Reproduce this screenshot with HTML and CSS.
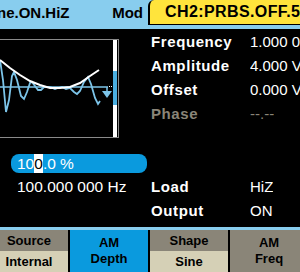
FILE: index.html
```html
<!DOCTYPE html>
<html>
  <head>
    <meta charset="utf-8" />
    <title>AM Depth</title>
    <meta name="viewport" content="width=device-width, initial-scale=1" />
    <link rel="stylesheet" href="styles.css">
  </head>
  <body>
    <div class="screen">
      <div class="topbar">
        <div class="ch1">
          <span class="ch1-name">ne.ON.HiZ</span>
          <span class="ch1-mode">Mod</span>
        </div>
        <div class="ch2">CH2:PRBS.OFF.500</div>
      </div>

      <div class="main">
        <div class="left">
          <div class="chart">
            <svg width="118" height="97" viewBox="0 0 118 97">
              <line x1="0" y1="47" x2="108" y2="47" stroke="#7cc4e8" stroke-width="1.5" />
              <path d="M0 20 L3 40 L6 72 L9 60 L12 36 L14 32 L17 40 L21 56 L24 59 L27 52 L30 43 L32 42 L35 46 L38 50 L41 50 L44 47 L50 47 L55 49 L58 48 L62 47 L66 49 L70 48 L74 52 L77 54 L80 51 L84 42 L88 37 L91 44 L95 58 L98 64 L100 61"
                fill="none" stroke="#7cc4e8" stroke-width="1.8" />
              <path d="M0 20 L10 28 L20 35 L30 41 L40 45 L50 48 L60 48 L70 47 L80 43 L90 36 L99 30"
                fill="none" stroke="#fff" stroke-width="2" />
              <line x1="107" y1="47" x2="107" y2="52" stroke="#7cc4e8" stroke-width="1.5" />
              <polygon points="102,51 112,51 107,58" fill="#7cc4e8" />
              <rect x="109" y="46" width="1" height="1" fill="#fff" />
              <rect x="111" y="46" width="1" height="1" fill="#fff" />
              <rect x="113" y="0" width="4" height="97" fill="#fff" />
              <rect x="113" y="31" width="4" height="34" fill="#4aaee0" />
            </svg>
          </div>
          <div class="depth-bar">10<span class="cursor">0</span>.0 %</div>
          <div class="freq">100.000 000 Hz</div>
        </div>

        <div class="params">
          <div class="row"><span class="label">Frequency</span><span class="value">1.000 000 kHz</span></div>
          <div class="row"><span class="label">Amplitude</span><span class="value">4.000 Vpp</span></div>
          <div class="row"><span class="label">Offset</span><span class="value">0.000 VDC</span></div>
          <div class="row off"><span class="label">Phase</span><span class="value">--.--</span></div>
          <div class="row gap"><span class="label">Load</span><span class="value">HiZ</span></div>
          <div class="row"><span class="label">Output</span><span class="value">ON</span></div>
        </div>
      </div>

      <div class="divider"></div>

      <div class="softkeys">
        <div class="key split">
          <div class="key-top">Source</div>
          <div class="key-bottom">Internal</div>
        </div>
        <div class="key active">
          <div>AM</div>
          <div>Depth</div>
        </div>
        <div class="key split">
          <div class="key-top">Shape</div>
          <div class="key-bottom">Sine</div>
        </div>
        <div class="key plain">
          <div>AM</div>
          <div>Freq</div>
        </div>
      </div>
    </div>
  </body>
</html>
```

FILE: styles.css
```css
body {
  margin: 0;
  background: #000;
  font-family: "Liberation Sans", Arial, sans-serif;
}

.screen {
  width: 300px;
  height: 272px;
  overflow: hidden;
  background: #000;
  color: #fff;
}

/* channel tabs */
.topbar {
  display: flex;
  align-items: flex-start;
  height: 29px;
  background: #88cdee;
}
.ch1 {
  flex: 0 0 148px;
  height: 24px;
  display: flex;
  align-items: center;
  justify-content: space-between;
  padding-right: 5px;
  box-sizing: border-box;
  font-size: 15px;
  font-weight: bold;
  color: #000;
  overflow: hidden;
}
.ch1-name {
  margin-left: -3px;
}
.ch2 {
  flex: 1;
  height: 25px;
  box-sizing: border-box;
  padding-left: 15px;
  line-height: 24px;
  background: #ffe43c;
  border-left: 2px solid #000;
  border-bottom: 1px solid #000;
  border-top-left-radius: 6px;
  font-size: 16px;
  letter-spacing: 0.4px;
  font-weight: bold;
  color: #000;
  white-space: nowrap;
  overflow: hidden;
}

/* main area */
.main {
  display: grid;
  grid-template-columns: 150px 150px;
  height: 198px;
}
.left {
  display: flex;
  flex-direction: column;
}
.chart {
  margin-top: 10px;
  width: 119px;
  height: 99px;
  box-sizing: border-box;
  border-top: 1px solid #8a8a8a;
  border-right: 1px solid #8a8a8a;
  border-bottom: 1px solid #8a8a8a;
}
.chart svg {
  display: block;
}
.depth-bar {
  margin: 16px 0 0 11px;
  width: 136px;
  height: 19px;
  line-height: 19px;
  padding-left: 6px;
  box-sizing: border-box;
  border-radius: 8px;
  background: #0a9ade;
  font-size: 15.5px;
  white-space: nowrap;
}
.cursor {
  display: inline-block;
  background: #fff;
  color: #000;
}
.freq {
  margin-top: 4px;
  padding-left: 17px;
  line-height: 20px;
  font-size: 15.5px;
  white-space: nowrap;
}

.params {
  padding: 1px 0 0 1px;
}
.row {
  display: flex;
  height: 24px;
  line-height: 24px;
  font-size: 15px;
  white-space: nowrap;
}
.row.gap {
  margin-top: 49px;
}
.label {
  flex: 0 0 99px;
  font-weight: bold;
  letter-spacing: 0.6px;
}
.value {
  overflow: hidden;
}
.row.off {
  color: #8a8578;
}

.divider {
  height: 3px;
  background: #88cdee;
}

/* soft keys */
.softkeys {
  display: flex;
  gap: 2px;
  height: 42px;
  margin-left: -10px;
}
.key {
  flex: 0 0 78px;
  display: flex;
  flex-direction: column;
  font-size: 13px;
  font-weight: bold;
  color: #000;
  text-align: center;
}
.key-top,
.key-bottom {
  flex: 1;
  line-height: 21px;
}
.key-top {
  background: #8a8578;
}
.key-bottom {
  background: #d5d0b6;
}
.key.active,
.key.plain {
  justify-content: center;
  line-height: 16px;
}
.key.active {
  background: #0a9ade;
}
.key.plain {
  background: #8a8578;
}
```
